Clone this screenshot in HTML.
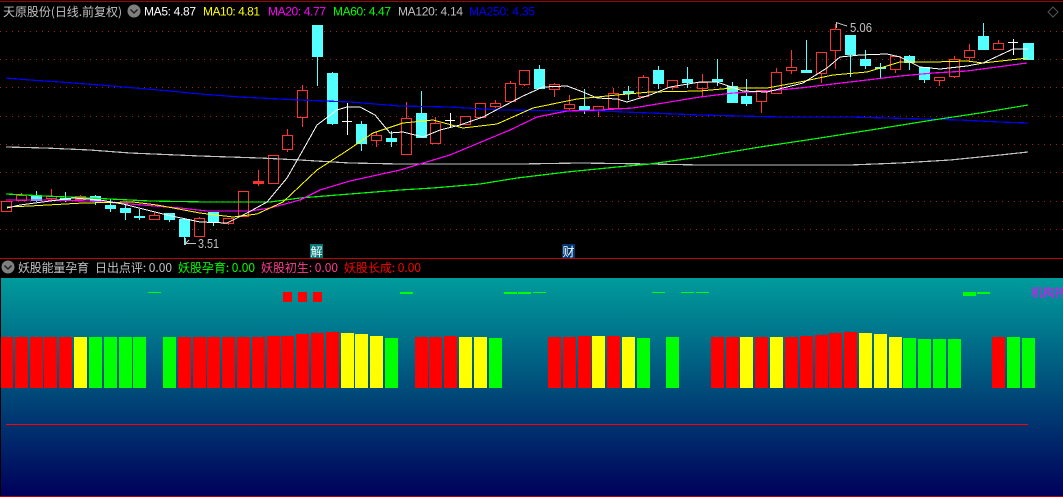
<!DOCTYPE html>
<html><head><meta charset="utf-8"><style>
html,body{margin:0;padding:0;background:#000;width:1063px;height:497px;overflow:hidden}
svg{display:block}
text{font-family:"Liberation Sans","WenQuanYi Zen Hei","Noto Sans CJK SC",sans-serif;font-size:12px}
.c{font-family:"WenQuanYi Zen Hei","Noto Sans CJK SC",sans-serif;font-size:12px}
</style></head><body>
<svg width="1063" height="497" viewBox="0 0 1063 497" xmlns="http://www.w3.org/2000/svg">
<defs><linearGradient id="g" x1="0" y1="0" x2="0" y2="1"><stop offset="0" stop-color="#009c9c"/><stop offset="1" stop-color="#00005a"/></linearGradient></defs>
<rect width="1063" height="497" fill="#000"/>
<rect x="0" y="1" width="1063" height="1" fill="#a00000"/>
<g stroke="#a02020" stroke-width="1" stroke-dasharray="1 5" shape-rendering="crispEdges">
<path d="M0 31.5H1063M0 59.5H1063M0 87.5H1063M0 116.5H1063M0 144.5H1063M0 172.5H1063M0 201.5H1063M0 229.5H1063"/>
</g>
<path fill="none" stroke="#ff3232" stroke-width="1" shape-rendering="crispEdges" d="M1.5 201.5h10v10h-10zM16.5 195.5h10v5h-10zM21.5 193V195M46.5 196.5h10v2h-10zM51.5 189V196M51.5 199V200M75.5 196.5h10v3h-10zM80.5 195V196M80.5 200V201M149.5 215.5h10v4h-10zM154.5 213V215M194.5 218.5h10v18h-10zM199.5 217V218M223.5 218.5h10v5h-10zM228.5 224V225M238.5 191.5h10v25h-10zM253.5 181.5h10v2h-10zM258.5 170V181M258.5 184V186M268.5 155.5h10v28h-10zM282.5 135.5h10v14h-10zM287.5 129V135M287.5 150V152M297.5 90.5h10v27h-10zM302.5 85V90M302.5 118V127M371.5 135.5h10v5h-10zM376.5 132V135M376.5 141V147M401.5 118.5h10v36h-10zM406.5 102V118M430.5 123.5h10v20h-10zM435.5 117V123M460.5 116.5h10v8h-10zM475.5 103.5h10v14h-10zM490.5 103.5h10v3h-10zM495.5 100V103M495.5 107V108M505.5 83.5h10v18h-10zM510.5 81V83M510.5 102V103M519.5 70.5h10v14h-10zM524.5 85V86M549.5 84.5h10v5h-10zM554.5 83V84M554.5 90V97M564.5 104.5h10v4h-10zM569.5 95V104M569.5 109V110M593.5 106.5h10v4h-10zM598.5 111V117M608.5 93.5h10v15h-10zM613.5 88V93M613.5 109V110M638.5 77.5h10v19h-10zM643.5 75V77M643.5 97V98M667.5 80.5h10v7h-10zM672.5 88V90M697.5 82.5h10v6h-10zM702.5 74V82M702.5 89V96M756.5 90.5h10v11h-10zM761.5 102V113M771.5 72.5h10v21h-10zM776.5 68V72M786.5 67.5h10v3h-10zM791.5 50V67M791.5 71V74M816.5 52.5h10v21h-10zM821.5 74V83M830.5 29.5h10v21h-10zM835.5 24V29M835.5 51V69M890.5 56.5h10v13h-10zM895.5 70V73M934.5 77.5h10v3h-10zM939.5 81V86M949.5 59.5h10v17h-10zM954.5 56V59M954.5 77V78M964.5 50.5h10v7h-10zM969.5 44V50M969.5 58V62M993.5 43.5h10v6h-10zM998.5 40V43"/>
<rect x="253" y="181" width="11" height="3" fill="#ff3232"/>
<path fill="#54ffff" shape-rendering="crispEdges" d="M31 196h11v5h-11zM36 191h1v11h-1zM60 198h11v3h-11zM65 192h1v10h-1zM90 196h11v5h-11zM95 195h1v10h-1zM105 205h11v4h-11zM110 199h1v13h-1zM120 208h11v5h-11zM125 204h1v16h-1zM134 216h11v2h-11zM139 209h1v11h-1zM164 213h11v7h-11zM169 213h1v9h-1zM179 219h11v18h-11zM184 218h1v27h-1zM208 212h11v11h-11zM213 212h1v14h-1zM312 25h11v32h-11zM317 25h1v61h-1zM327 73h11v51h-11zM332 72h1v53h-1zM356 124h11v20h-11zM361 121h1v30h-1zM386 138h11v4h-11zM391 131h1v16h-1zM416 113h11v25h-11zM421 91h1v47h-1zM534 69h11v20h-11zM539 65h1v24h-1zM579 106h11v5h-11zM584 89h1v25h-1zM623 91h11v3h-11zM628 86h1v14h-1zM653 70h11v14h-11zM658 66h1v23h-1zM682 79h11v4h-11zM687 67h1v21h-1zM712 79h11v3h-11zM717 59h1v27h-1zM727 86h11v17h-11zM732 82h1v21h-1zM741 96h11v8h-11zM746 79h1v27h-1zM801 70h11v3h-11zM806 40h1v33h-1zM845 35h11v20h-11zM850 35h1v42h-1zM860 59h11v7h-11zM865 50h1v19h-1zM875 67h11v2h-11zM880 63h1v15h-1zM904 56h11v7h-11zM909 55h1v15h-1zM919 67h11v13h-11zM924 67h1v16h-1zM978 36h11v14h-11zM983 23h1v27h-1zM1023 43h11v17h-11z"/>
<path fill="none" stroke="#fff" shape-rendering="crispEdges" d="M342 121.5H352M347.5 103V135M450.5 113V127M445 120.5H455M1008 42.5H1018M1013.5 39V55"/>
<g fill="none" stroke-width="1.2" shape-rendering="crispEdges">
<polyline stroke="#0000ff" points="6,78 30,80 60,82 100,85 135,88 170,91 200,94 240,97 300,100 350,102 400,106 450,107 500,110 600,111 650,113 700,115 780,117 850,117 960,120 1000,122 1028,123"/>
<polyline stroke="#c0c0c0" points="6,147 45,148 90,150 130,153 200,156 260,158 300,160 350,163 400,164 520,164 580,163 650,164 700,165 800,165 850,165 900,163 950,160 1000,155 1028,152"/>
<polyline stroke="#00ff00" points="6,194 45,196 90,198 150,201 207,202 270,202 300,198 350,194 400,190 433,188 480,184 517,178 567,172 617,167 650,164 700,157 760,147 820,138 877,129 933,120 980,113 1028,105"/>
<polyline stroke="#ff00ff" points="6,200 45,200 90,201 130,204 180,208 207,211 250,211 270,208 285,204 300,200 320,190 350,181 400,170 450,155 510,130 537,117 567,111 600,110 633,108 700,97 733,93 767,91 800,88 833,84 867,80 900,76 933,73 967,71 1027,63"/>
</g>
<g fill="none" stroke-width="1" shape-rendering="crispEdges">
<polyline stroke="#ffff00" points="7,207 30,206 83,203 133,202 157,205 200,213 233,217 257,214 283,202 317,170 348,150 373,133 403,123 433,120 463,128 497,124 533,108 577,99 617,95 650,92 700,91 733,88 767,88 800,82 833,75 867,72 900,62 933,62 967,61 983,63 1028,58"/>
<polyline stroke="#ffffff" points="7,208 20,205 50,201 73,198 100,200 123,204 143,209 167,215 200,222 227,223 247,213 267,202 287,178 303,150 317,125 337,110 347,107 360,107 375,115 390,133 403,132 423,137 440,130 460,125 483,117 500,108 523,96 543,87 567,86 583,92 597,98 617,99 627,102 650,95 670,87 700,82 717,82 743,91 767,92 787,87 803,83 827,68 840,57 860,55 887,54 900,57 920,67 940,69 967,66 983,63 1013,49 1028,49"/>
</g>
<g fill="none" stroke="#c0c0c0" stroke-width="1" shape-rendering="crispEdges">
<path d="M836.5 22V28M836 22.5L847 26M185.5 238V245M186 243.5H196M186 243L189 240"/>
</g>
<text x="850" y="32" fill="#c0c0c0" style="font-size:13px" textLength="22" lengthAdjust="spacingAndGlyphs">5.06</text>
<text x="198" y="248" fill="#c0c0c0" style="font-size:13px" textLength="21" lengthAdjust="spacingAndGlyphs">3.51</text>
<text class="c" x="3" y="16" fill="#c0c0c0" textLength="119" lengthAdjust="spacing">天原股份(日线.前复权)</text>
<circle cx="134" cy="11" r="6.5" fill="#808080"/><path d="M130.5 9.5L134 13L137.5 9.5" fill="none" stroke="#222" stroke-width="1.5"/>
<text x="144" y="15.5" fill="#fff" textLength="52">MA5: 4.87</text>
<text x="203" y="15.5" fill="#ff0" textLength="57">MA10: 4.81</text>
<text x="268" y="15.5" fill="#f0f" textLength="58">MA20: 4.77</text>
<text x="333" y="15.5" fill="#0f0" textLength="58">MA60: 4.47</text>
<text x="398" y="15.5" fill="#c0c0c0" textLength="65">MA120: 4.14</text>
<text x="469" y="15.5" fill="#00f" textLength="66">MA250: 4.35</text>
<path d="M1053 7L1058 12L1053 17L1048 12Z" fill="none" stroke="#555"/>
<rect x="310" y="244" width="13" height="14" fill="#007878"/><text class="c" x="310.5" y="256" fill="#fff">解</text>
<rect x="562" y="244" width="13" height="14" fill="#003870"/><text class="c" x="562.5" y="256" fill="#fff">财</text>
<rect x="0" y="258" width="1063" height="1" fill="#c00000"/>
<circle cx="8" cy="267" r="6.5" fill="#808080"/><path d="M4.5 265.5L8 269L11.5 265.5" fill="none" stroke="#222" stroke-width="1.5"/>
<text class="c" x="18" y="272" fill="#c0c0c0" textLength="71">妖股能量孕育</text>
<text class="c" x="95" y="272" fill="#c0c0c0" textLength="77">日出点评: 0.00</text>
<text class="c" x="178" y="272" fill="#00ff00" textLength="77">妖股孕育: 0.00</text>
<text class="c" x="261" y="272" fill="#ff3c8c" textLength="77">妖股初生: 0.00</text>
<text class="c" x="344" y="272" fill="#ff0000" textLength="77">妖股长成: 0.00</text>
<rect x="1" y="278" width="1062" height="218" fill="url(#g)"/>
<rect x="0" y="496" width="1063" height="1" fill="#c00000"/>
<g fill="#f00" shape-rendering="crispEdges">
<path d="M283 292h9v10h-9zM298 292h9v10h-9zM313 292h9v10h-9z"/>
<path d="M1 337h12v51h-12zM15 337h13v51h-13zM30 337h13v51h-13zM44 337h13v51h-13zM59 337h13v51h-13zM178 337h13v51h-13zM193 337h13v51h-13zM207 337h13v51h-13zM222 337h13v51h-13zM237 337h13v51h-13zM252 337h13v51h-13zM267 336h13v52h-13zM281 336h13v52h-13zM296 334h13v54h-13zM311 333h13v55h-13zM326 332h13v56h-13zM415 337h13v51h-13zM429 337h13v51h-13zM444 336h13v52h-13zM548 337h13v51h-13zM563 337h13v51h-13zM578 336h13v52h-13zM607 336h13v52h-13zM711 337h13v51h-13zM726 337h13v51h-13zM755 337h13v51h-13zM785 337h13v51h-13zM800 336h13v52h-13zM815 335h13v53h-13zM829 333h13v55h-13zM844 332h13v56h-13zM992 337h13v51h-13z"/>
</g>
<path fill="#ff0" shape-rendering="crispEdges" d="M74 337h13v51h-13zM341 333h13v55h-13zM355 334h13v54h-13zM370 336h13v52h-13zM459 337h13v51h-13zM474 337h13v51h-13zM592 336h13v52h-13zM622 337h13v51h-13zM740 337h13v51h-13zM770 337h13v51h-13zM859 333h13v55h-13zM874 334h13v54h-13zM889 337h13v51h-13z"/>
<path fill="#0f0" shape-rendering="crispEdges" d="M89 337h13v51h-13zM104 337h13v51h-13zM119 337h13v51h-13zM133 337h13v51h-13zM163 337h13v51h-13zM385 338h13v50h-13zM489 338h13v50h-13zM637 338h13v50h-13zM666 337h13v51h-13zM903 338h13v50h-13zM918 339h13v49h-13zM933 339h13v49h-13zM948 339h13v49h-13zM1007 337h13v51h-13zM1022 338h13v50h-13z"/>
<path fill="#0f0" shape-rendering="crispEdges" d="M148 292h13v1h-13zM400 292h13v2h-13zM504 292h13v2h-13zM518 292h13v2h-13zM533 292h13v1h-13zM652 292h13v1h-13zM681 292h13v1h-13zM696 292h13v1h-13zM963 292h13v4h-13zM977 292h13v2h-13z"/>
<text x="1031" y="297" fill="#ff00ff" style="font-family:'Noto Sans CJK SC',sans-serif;font-size:12px">机构持</text>
<rect x="6" y="424" width="1022" height="1" fill="#ff0000"/>
</svg>
</body></html>
